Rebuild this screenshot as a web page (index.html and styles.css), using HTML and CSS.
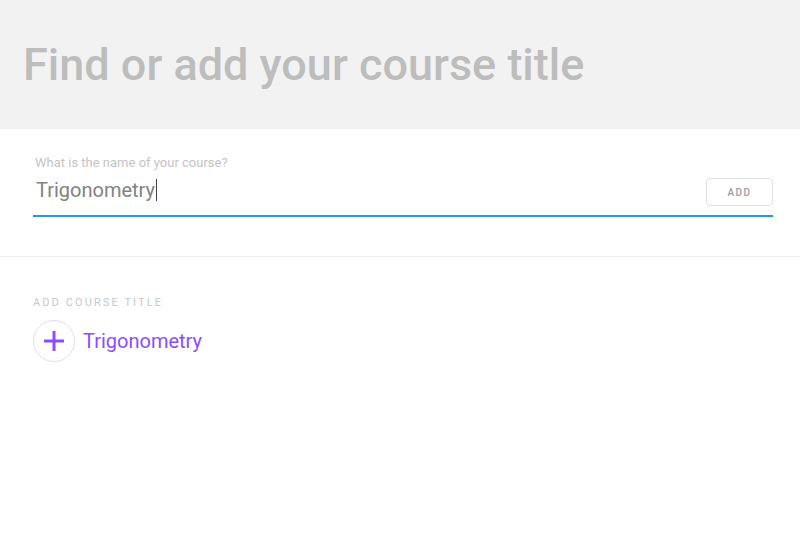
FILE: index.html
```html
<!DOCTYPE html>
<html lang="en">
<head>
  <meta charset="UTF-8">
  <title>Course title</title>
  <link rel="stylesheet" href="styles.css">
</head>
<body>
  <header class="header">
    <h1>Find or add your course title</h1>
  </header>

  <section class="form">
    <label class="field-label" for="courseName">What is the name of your course?</label>
    <div class="field-row">
      <div class="field-value" id="courseName">Trigonometry<span class="caret"></span></div>
      <button class="add-btn">ADD</button>
    </div>
  </section>

  <section class="results">
    <div class="results-label">ADD COURSE TITLE</div>
    <div class="result-item">
      <span class="plus-circle">
        <svg width="22" height="22" viewBox="0 0 22 22">
          <path d="M11 1 V21 M1 11 H21" stroke="#8a4dff" stroke-width="3" fill="none"/>
        </svg>
      </span>
      <span class="result-text">Trigonometry</span>
    </div>
  </section>
</body>
</html>
```

FILE: styles.css
```css
* {
  box-sizing: border-box;
}

body {
  margin: 0;
  font-family: Roboto, 'Liberation Sans', sans-serif;
  background: #fff;
}

.header {
  height: 129px;
  padding: 37px 23px 0;
  background: #f2f2f2;
}

.header h1 {
  margin: 0;
  font-size: 45px;
  line-height: 56px;
  font-weight: 500;
  color: #bdbdbd;
}

.form {
  padding: 26px 27px 39px 33px;
  border-bottom: 1px solid #efefef;
}

.field-label {
  display: block;
  margin-left: 2px;
  font-size: 13px;
  line-height: 15px;
  color: #c4c4c4;
}

.field-row {
  display: flex;
  justify-content: space-between;
  align-items: flex-start;
  margin-top: 8px;
  padding: 0 0 9px 3px;
  border-bottom: 2px solid #2196f3;
}

.field-value {
  font-size: 20px;
  line-height: 24px;
  color: #828282;
}

.caret {
  display: inline-block;
  width: 1px;
  height: 22px;
  margin-left: 1px;
  vertical-align: -4px;
  background: #444;
}

.add-btn {
  width: 67px;
  height: 28px;
  padding: 0;
  border: 1px solid #e2e2e2;
  border-radius: 4px;
  background: #fff;
  font-family: inherit;
  font-size: 10px;
  font-weight: 500;
  letter-spacing: 1.5px;
  color: #9e9e9e;
}

.results {
  padding: 39px 33px 0;
}

.results-label {
  font-size: 11px;
  line-height: 13px;
  letter-spacing: 2.1px;
  color: #c8c8c8;
}

.result-item {
  display: flex;
  align-items: center;
  gap: 8px;
  margin-top: 11px;
}

.plus-circle {
  display: flex;
  align-items: center;
  justify-content: center;
  width: 42px;
  height: 42px;
  border: 1px solid #e4d9fb;
  border-radius: 50%;
}

.result-text {
  font-size: 20px;
  color: #8a4dff;
}
```
